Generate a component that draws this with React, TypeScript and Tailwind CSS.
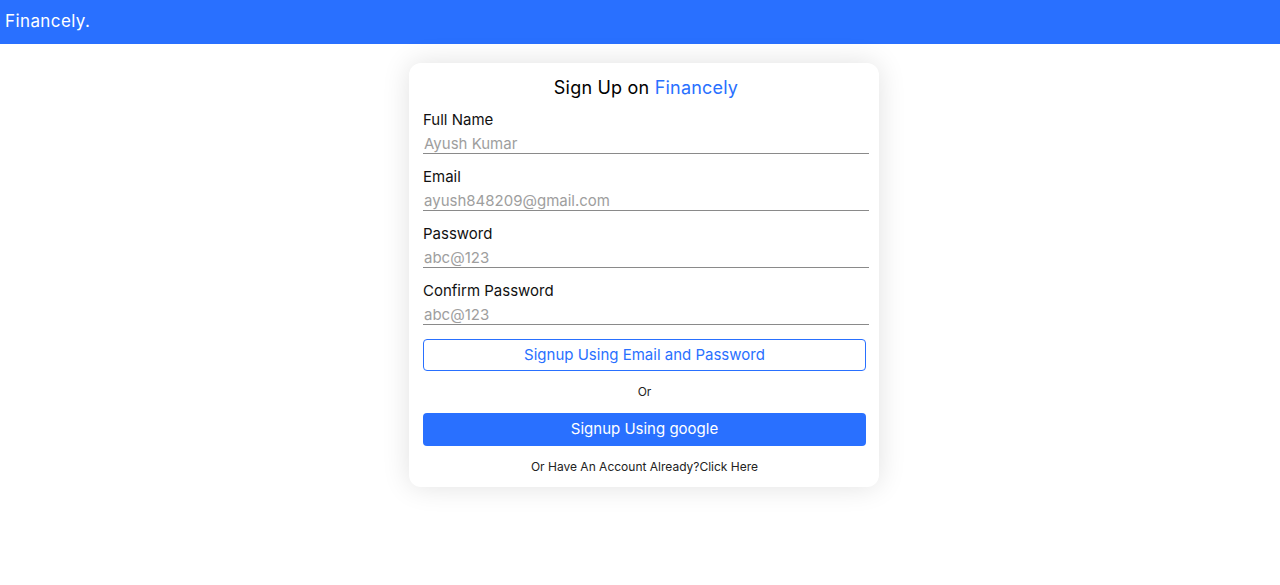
import React from "react";

const font = { fontFamily: "Inter, 'Noto Sans', sans-serif" };

function Field({ label, placeholder }: { label: string; placeholder: string }) {
  return (
    <div className="flex flex-col mb-[12px]">
      <label className="pt-[1px] text-[15px] leading-[20px] text-[#111]">{label}</label>
      <input
        type="text"
        placeholder={placeholder}
        className="mt-[3px] h-[21px] w-full border-0 border-b border-[#8a8a8a] bg-transparent px-[1px] text-[15px] leading-[20px] text-black placeholder:text-[#9e9e9e] outline-none"
      />
    </div>
  );
}

export default function App() {
  return (
    <div className="min-h-[585px] w-full bg-white" style={font}>
      <header className="h-[44px] w-full bg-[#2970ff] flex items-center px-[5px]">
        <span className="text-white text-[17px] tracking-[0.4px]">Financely.</span>
      </header>
      <div className="flex justify-center pl-[8px] pt-[19px]">
        <div className="w-[470px] rounded-[12px] bg-white shadow-[0_0_28px_rgba(0,0,0,0.12)] pl-[14px] pr-[10px] pt-[12px] pb-[12px]">
          <h2 className="text-center text-[18px] leading-[26px] text-black mb-[8px] tracking-[0.2px]">
            Sign Up on <span className="text-[#2970ff]">Financely</span>
          </h2>
          <Field label="Full Name" placeholder="Ayush Kumar" />
          <Field label="Email" placeholder="ayush848209@gmail.com" />
          <Field label="Password" placeholder="abc@123" />
          <Field label="Confirm Password" placeholder="abc@123" />
          <button className="mt-[2px] h-[32px] w-[443px] rounded-[4px] border border-[#2970ff] bg-white text-[15px] text-[#2970ff]">
            Signup Using Email and Password
          </button>
          <p className="w-[443px] text-center text-[12px] leading-[16px] text-[#222] mt-[13px] mb-[13px]">Or</p>
          <button className="h-[33px] w-[443px] rounded-[4px] bg-[#2970ff] text-[15px] text-white">
            Signup Using google
          </button>
          <p className="w-[443px] text-center text-[12px] leading-[16px] text-[#222] mt-[13px]">
            Or Have An Account Already?Click Here
          </p>
        </div>
      </div>
    </div>
  );
}
